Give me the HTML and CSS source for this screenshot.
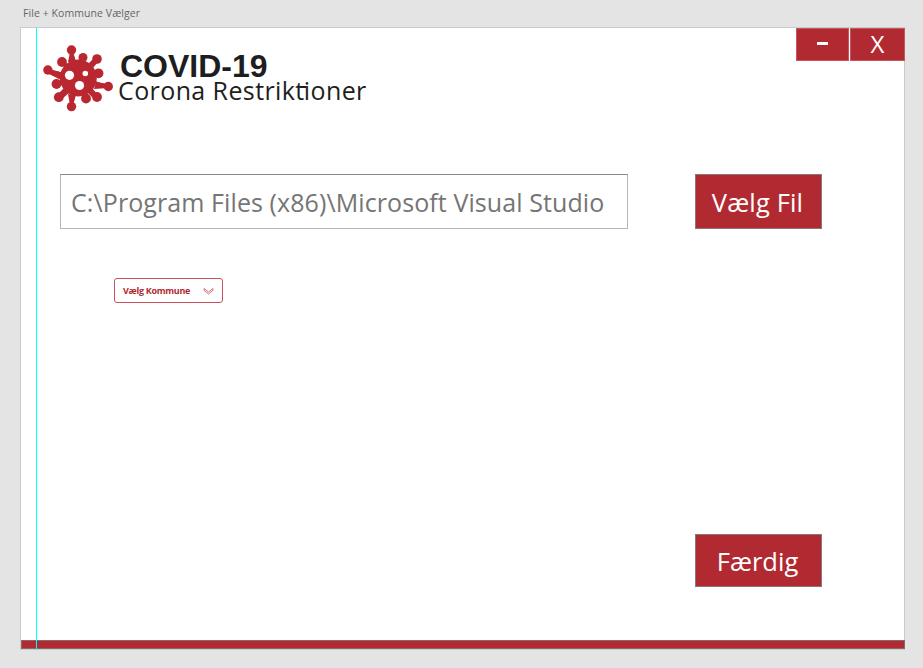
FILE: index.html
```html
<!DOCTYPE html>
<html lang="da">
<head>
<meta charset="utf-8">
<title>File + Kommune Vælger</title>
<link rel="stylesheet" href="styles.css">
</head>
<body>
<div class="board-name"><span>File + Kommune Vælger</span></div>
<main class="board">
  <header class="top">
    <div class="brand">
      <svg class="virus" width="72" height="68" viewBox="0 0 72 68">
        <g stroke="#b92830" stroke-width="2.500" fill="#b92830">
          <path d="M35 33L28.500 6M35 33L53.500 15.500M35 33L5 26.500M35 33L65 42.500M35 33L28.500 63M35 33L16 53M35 33L53.500 53.500"/>
          <path stroke-width="4" d="M35 33L40 14M35 33L19 18M35 33L55 29M35 33L13 40M35 33L43 55"/>
          <g stroke="none">
            <circle cx="35.300" cy="34" r="18.500"/>
            <circle cx="28.500" cy="6" r="4.700"/><circle cx="54" cy="15" r="4.800"/>
            <circle cx="4.900" cy="26" r="4.700"/><circle cx="65.300" cy="42.500" r="4.700"/>
            <circle cx="28.500" cy="62.600" r="4.700"/><circle cx="15.800" cy="53.200" r="4.900"/>
            <circle cx="54" cy="53" r="4.900"/><circle cx="40" cy="13.500" r="4.500"/>
            <circle cx="19" cy="18" r="4.900"/><circle cx="55.500" cy="29.300" r="4.900"/>
            <circle cx="13.500" cy="40" r="4.900"/><circle cx="43" cy="54.500" r="4.900"/>
            <path d="M27 8h3l3 10h-8zM50 15l5 3-6 7-5-4zM6 25l14 4-2 7-14-7zM65 44l-14 1 2-7 12 2zM27 61l-2-11 8 1-3 10zM14 51l8-8 5 5-8 7zM51 55l-6-6 4-5 7 8z"/>
          </g>
        </g>
        <circle cx="26.500" cy="31.300" r="4.600" fill="#fff"/>
        <circle cx="42.300" cy="29.500" r="2.800" fill="#fff"/>
        <circle cx="36.500" cy="41.500" r="4.600" fill="#fff"/>
      </svg>
      <div class="brand-text">
        <div class="title">COVID-19</div>
        <div class="subtitle"><span>Corona Restrik<span class="lig">t</span>ioner</span></div>
      </div>
    </div>
    <div class="window-buttons">
      <button class="win"><i class="minus"></i></button>
      <button class="win"><span class="close">X</span></button>
    </div>
  </header>
  <section class="file-row">
    <div class="path"><span>C:\Program Files (x86)\Microsoft Visual Studio</span></div>
    <button class="action"><span class="pick">Vælg Fil</span></button>
  </section>
  <button class="select"><span>Vælg Kommune</span>
    <svg width="11" height="8" viewBox="0 0 11 8" fill="none" stroke="#c8545b" stroke-width=".8"><path d="M1 1.500L5.500 5L10 1.500M1 3.300L5.500 7L10 3.300M1 1.500v1.800M10 1.500v1.800"/></svg>
  </button>
  <button class="action done"><span>Færdig</span></button>
  <footer class="bar"></footer>
  <div class="guide"></div>
</main>
</body>
</html>
```
FILE: styles.css
```css
* { box-sizing: border-box; }
body { margin: 0; width: 923px; height: 668px; overflow: hidden; background: #e4e4e4; font-family: "Open Sans", "Noto Sans", sans-serif; }
button { margin: 0; padding: 0; font-family: inherit; border-radius: 0; }
span { display: inline-block; white-space: nowrap; }
.board-name { height: 27px; padding: 5px 0 0 23px; font-size: 10.500px; line-height: 16px; color: #666; letter-spacing: .07px; }
.board { position: relative; display: flex; flex-direction: column; width: 885px; height: 623px; margin-left: 20px; border: 1px solid #cbcbcb; background: #fff; }
.top { display: flex; justify-content: space-between; height: 146px; }
.brand { display: flex; padding: 16px 0 0 22px; }
.virus { display: block; }
.brand-text { margin-left: 4px; color: #1e1e20; }
.title { font: bold 32px/28px "Liberation Sans", sans-serif; margin: 8px 0 0 1px; }
.subtitle { margin: -2px 0 0 -1px; font-size: 25px; line-height: 24px; letter-spacing: .4px; }
.lig { position: relative; letter-spacing: -.5px; }
.lig::after { content: ""; position: absolute; left: 5px; top: 8px; width: 6px; height: 2px; background: #1e1e20; }
.window-buttons { display: flex; gap: 1px; margin-right: -1px; }
.win { display: flex; align-items: center; justify-content: center; width: 53px; height: 33px; border: 1px solid #c8565d; background: #b22a31; color: #fff; font-size: 24px; line-height: 30px; }
.win + .win { width: 55px; }
.close { margin-top: -1px; }
.minus { width: 11px; height: 3px; background: #fff; margin-top: -2px; }
.file-row { display: flex; gap: 67px; margin-left: 39px; }
.path { width: 568px; height: 55px; padding: 0 0 0 10px; border: 1px solid #b5b5b5; border-top-color: #888; color: #757575; font-size: 25px; line-height: 54px; letter-spacing: .09px; }
.action { display: block; width: 127px; height: 55px; border: 1px solid #8c7778; background: #b22a31; color: #fff; font-size: 25.500px; line-height: 52px; }
.pick { margin: 0 2px 0 0; letter-spacing: .15px; }
.select { display: flex; align-items: center; justify-content: space-between; width: 109px; height: 25px; margin: 49px 0 0 93px; padding: 0 8px; border: 1px solid #c8545b; border-radius: 3px; background: #fff; color: #b22a31; font-size: 9px; font-weight: 700; line-height: 23px; letter-spacing: -.3px; }
.done { height: 53px; margin: 231px 0 0 674px; padding-right: 2px; }
.bar { width: 884px; height: 9px; margin-top: auto; border: 1px solid #85696b; background: #b22a31; }
.guide { position: absolute; left: 15px; top: 0; width: 1px; height: 622px; background: #00ffff; }
```
